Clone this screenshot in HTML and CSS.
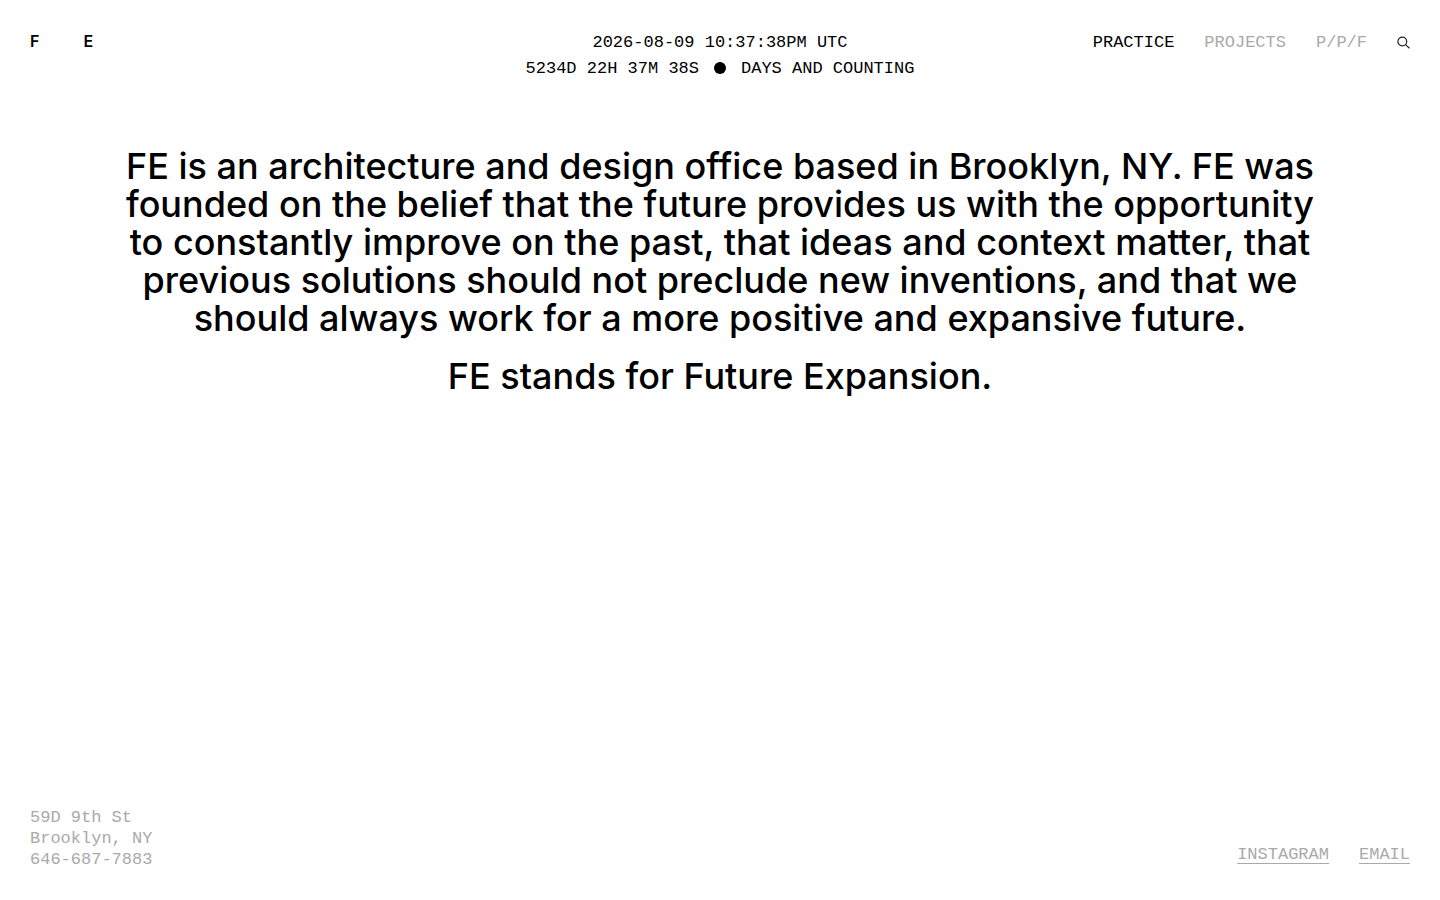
FILE: index.html
```html
<!DOCTYPE html>
<html lang="en">
<head>
    <meta charset="UTF-8">
    <meta name="viewport" content="width=device-width, initial-scale=1.0">
    <title>FE - Practice</title>
    <link rel="stylesheet" href="styles.css">
</head>
<body>
    <header class="site-header">
        <a class="logo" href="#" aria-label="FE home"><span>F</span><span>E</span></a>
        <div class="clock">
            <div>2026-08-09 10:37:38PM UTC</div>
            <div class="counter">
                <span>5234D 22H 37M 38S</span>
                <svg class="dot" width="12" height="12" viewBox="0 0 12 12"><circle cx="6" cy="6" r="6"/></svg>
                <span>DAYS AND COUNTING</span>
            </div>
        </div>
        <nav class="site-nav">
            <a class="active" href="#">PRACTICE</a>
            <a href="#">PROJECTS</a>
            <a href="#">P/P/F</a>
            <button class="search-button" type="button" aria-label="Search">
                <svg width="13" height="14" viewBox="0 0 13 14" fill="none" stroke="currentColor" stroke-width="1.2">
                    <circle cx="5.3" cy="5.5" r="4.4"/>
                    <path d="M8.5 8.6L12.5 12.2"/>
                </svg>
            </button>
        </nav>
    </header>

    <main class="intro">
        <p>FE is an architecture and design office based in Brooklyn, NY. FE was founded on the belief that the future provides us with the opportunity to constantly improve on the past, that ideas and context matter, that previous solutions should not preclude new inventions, and that we should always work for a more positive and expansive future.</p>
        <p>FE stands for Future Expansion.</p>
    </main>

    <footer class="site-footer">
        <address>
            59D 9th St<br>
            Brooklyn, NY<br>
            646-687-7883
        </address>
        <div class="social">
            <a href="#">INSTAGRAM</a>
            <a href="#">EMAIL</a>
        </div>
    </footer>
</body>
</html>
```
FILE: styles.css
```css
* {
    box-sizing: border-box;
}
body {
    display: flex;
    flex-direction: column;
    min-height: 100vh;
    margin: 0;
    padding: 30px;
    background-color: #fff;
    color: #000;
    font-family: "Liberation Mono", "Courier New", monospace;
    font-size: 17px;
    line-height: 26px;
}
a {
    color: inherit;
    text-decoration: none;
}
.site-header {
    display: grid;
    grid-template-columns: 1fr auto 1fr;
    align-items: start;
}
.logo {
    display: flex;
    gap: 44px;
    font-family: Inter, Arial, sans-serif;
    font-size: 16px;
    font-weight: 600;
    line-height: 22px;
}
.clock {
    text-align: center;
}
.counter {
    display: flex;
    align-items: center;
    justify-content: center;
    gap: 15px;
}
.dot {
    margin-bottom: 2px;
}
.site-nav {
    display: flex;
    justify-content: flex-end;
    align-items: center;
    gap: 30px;
    color: #aaa;
}
.site-nav .active {
    color: #000;
}
.search-button {
    display: flex;
    padding: 0;
    border: none;
    background: none;
    color: #222;
    cursor: pointer;
}
.intro {
    flex: 1;
    padding: 65px 90px 0;
    font-family: Inter, "Helvetica Neue", Arial, sans-serif;
    font-size: 36px;
    font-weight: 500;
    line-height: 38px;
    text-align: center;
}
.intro p {
    margin: 0 0 20px;
}
.site-footer {
    display: flex;
    justify-content: space-between;
    align-items: flex-end;
    color: #aaa;
    line-height: 21px;
}
address {
    font-style: normal;
}
.social {
    display: flex;
    gap: 30px;
}
.social a {
    border-bottom: 1px solid #aaa;
    line-height: 17px;
    margin-bottom: 6px;
}
```
